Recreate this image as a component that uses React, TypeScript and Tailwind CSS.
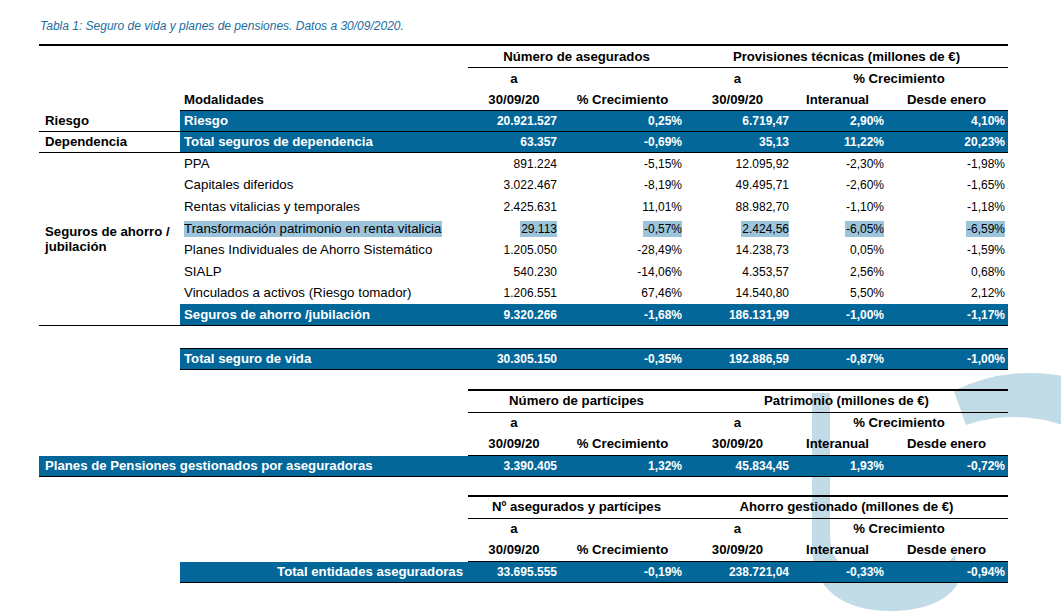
import React from "react";

const FONT = { fontFamily: '"Liberation Sans", Arial, sans-serif' };
const G7 = "grid grid-cols-[141px_288px_92px_125px_105px_95px_123px]";
const G6 = "grid grid-cols-[288px_92px_125px_105px_95px_123px]";
const G5 = "grid grid-cols-[92px_125px_105px_95px_123px]";
const PR = ["pr-[3px]", "pr-[3px]", "pr-[1px]", "pr-[1px]", "pr-[3px]"];
const BLUE = "bg-[#03679a]";

type Vals = [string, string, string, string, string];

function NumCells({ vals, bold, white, border, hl, h }: { vals: Vals; bold?: boolean; white?: boolean; border?: string; hl?: boolean; h: string }) {
  return (
    <>
      {vals.map((v, i) => (
        <div
          key={i}
          className={`${h} ${border ?? ""} ${PR[i]} flex items-center justify-end text-[12px] ${bold ? "font-bold" : ""} ${white ? "text-white" : "text-black"}`}
        >
          {hl ? <span className="bg-[#9cc5dc] leading-[16px] inline-block pl-[1px]">{v}</span> : v}
        </div>
      ))}
    </>
  );
}

function SectionHeader({ first, left, right, modal }: { first?: boolean; left: string; right: string; modal?: boolean }) {
  const top = "border-t-2 border-black";
  const hdr = "font-bold text-[13.2px] text-black flex items-center justify-center";
  return (
    <div className={G7}>
      <div className={`h-[24px] ${first ? top : ""}`} />
      <div className={`h-[24px] ${first ? top : ""}`} />
      <div className={`col-span-2 h-[24px] ${top} border-b ${hdr}`}>{left}</div>
      <div className={`col-span-3 h-[24px] ${top} border-b ${hdr}`}>{right}</div>

      <div className="h-[21px]" />
      <div className="h-[21px]" />
      <div className={`h-[21px] ${hdr}`}>a</div>
      <div className="h-[21px]" />
      <div className={`h-[21px] ${hdr}`}>a</div>
      <div className={`col-span-2 h-[21px] ${hdr}`}>% Crecimiento</div>

      <div className="h-[22px]" />
      <div className={`h-[22px] ${modal ? "border-b border-black" : ""} font-bold text-[13.2px] flex items-center pl-[4px]`}>
        {modal ? "Modalidades" : ""}
      </div>
      <div className={`h-[22px] border-b border-black ${hdr}`}>30/09/20</div>
      <div className={`h-[22px] border-b border-black ${hdr}`}>% Crecimiento</div>
      <div className={`h-[22px] border-b border-black ${hdr}`}>30/09/20</div>
      <div className={`h-[22px] border-b border-black ${hdr}`}>Interanual</div>
      <div className={`h-[22px] border-b border-black ${hdr}`}>Desde enero</div>
    </div>
  );
}

const detail: { label: string; vals: Vals; hl?: boolean }[] = [
  { label: "PPA", vals: ["891.224", "-5,15%", "12.095,92", "-2,30%", "-1,98%"] },
  { label: "Capitales diferidos", vals: ["3.022.467", "-8,19%", "49.495,71", "-2,60%", "-1,65%"] },
  { label: "Rentas vitalicias y temporales", vals: ["2.425.631", "11,01%", "88.982,70", "-1,10%", "-1,18%"] },
  { label: "Transformación patrimonio en renta vitalicia", vals: ["29.113", "-0,57%", "2.424,56", "-6,05%", "-6,59%"], hl: true },
  { label: "Planes Individuales de Ahorro Sistemático", vals: ["1.205.050", "-28,49%", "14.238,73", "0,05%", "-1,59%"] },
  { label: "SIALP", vals: ["540.230", "-14,06%", "4.353,57", "2,56%", "0,68%"] },
  { label: "Vinculados a activos (Riesgo tomador)", vals: ["1.206.551", "67,46%", "14.540,80", "5,50%", "2,12%"] },
];

function Watermark() {
  return (
    <svg className="absolute left-0 top-0 pointer-events-none" width={1061} height={611} viewBox="0 0 1061 611">
      <path
        d="M 953.8 390.8 A 172 172 0 0 1 1179 459 L 1158 530 A 148 148 0 0 0 966 425 Z"
        fill="#c1dbe7"
      />
      <path
        d="M 812 393 L 830 393 L 830 535 C 830 565 850 578 890 578 C 925 578 945 568 955 555 L 957 585 C 945 603 920 611 890 611 C 845 611 812 590 812 545 Z"
        fill="#c1dbe7"
      />
    </svg>
  );
}

export default function App() {
  const blueLabel = "font-bold text-[13.2px] text-white flex items-center";
  const colA = "font-bold text-[13.2px] text-black flex items-center pl-[6px]";
  return (
    <div className="relative w-[1061px] h-[611px] bg-white overflow-hidden" style={FONT}>
      <Watermark />
      <div className="relative z-10">
        <div className="pt-[19px] pl-[40px] h-[44px] text-[12px] leading-[14px] italic text-[#1b6e9f]">
          Tabla 1: Seguro de vida y planes de pensiones. Datos a 30/09/2020.
        </div>

        <div className="ml-[39px] w-[969px]">
          {/* Section 1 */}
          <SectionHeader first modal left="Número de asegurados" right="Provisiones técnicas (millones de €)" />

          <div className={G7}>
            <div className={`h-[21px] border-b border-black ${colA}`}>Riesgo</div>
            <div className={`h-[21px] border-b border-black ${BLUE} ${blueLabel} pl-[4px]`}>Riesgo</div>
            <div className={`col-span-5 ${BLUE} ${G5}`}>
              <NumCells h="h-[21px]" border="border-b border-black" bold white vals={["20.921.527", "0,25%", "6.719,47", "2,90%", "4,10%"]} />
            </div>

            <div className={`h-[21px] border-b border-black ${colA}`}>Dependencia</div>
            <div className={`h-[21px] border-b border-black ${BLUE} ${blueLabel} pl-[4px]`}>Total seguros de dependencia</div>
            <div className={`col-span-5 ${BLUE} ${G5}`}>
              <NumCells h="h-[21px]" border="border-b border-black" bold white vals={["63.357", "-0,69%", "35,13", "11,22%", "20,23%"]} />
            </div>
          </div>

          <div className="flex">
            <div className={`w-[141px] h-[173px] border-b border-black ${colA} leading-[15px]`}>
              Seguros de ahorro /<br />jubilación
            </div>
            <div className={G6}>
              {detail.map((r) => (
                <React.Fragment key={r.label}>
                  <div className="h-[21.6px] text-[13.3px] text-black flex items-center pl-[4px]">
                    {r.hl ? <span className="bg-[#9cc5dc] leading-[16px] inline-block pr-[1px]">{r.label}</span> : r.label}
                  </div>
                  <NumCells h="h-[21.6px]" vals={r.vals} hl={r.hl} />
                </React.Fragment>
              ))}
              <div className={`h-[21.8px] border-b border-black ${BLUE} ${blueLabel} pl-[4px]`}>Seguros de ahorro /jubilación</div>
              <div className={`col-span-5 ${BLUE} ${G5}`}>
                <NumCells h="h-[21.8px]" border="border-b border-black" bold white vals={["9.320.266", "-1,68%", "186.131,99", "-1,00%", "-1,17%"]} />
              </div>
            </div>
          </div>

          <div className={`${G7} mt-[21.5px]`}>
            <div className="h-[22.5px]" />
            <div className={`h-[22.5px] border-y border-black ${BLUE} ${blueLabel} pl-[4px]`}>Total seguro de vida</div>
            <div className={`col-span-5 ${BLUE} ${G5}`}>
              <NumCells h="h-[22.5px]" border="border-y border-black" bold white vals={["30.305.150", "-0,35%", "192.886,59", "-0,87%", "-1,00%"]} />
            </div>
          </div>

          {/* Section 2 */}
          <div className="mt-[18.5px]">
            <SectionHeader left="Número de partícipes" right="Patrimonio (millones de €)" />
            <div className={G7}>
              <div className={`col-span-2 h-[21.5px] border-b border-black ${BLUE} ${blueLabel} pl-[6px]`}>
                Planes de Pensiones gestionados por aseguradoras
              </div>
              <div className={`col-span-5 ${BLUE} ${G5}`}>
                <NumCells h="h-[21.5px]" border="border-b border-black" bold white vals={["3.390.405", "1,32%", "45.834,45", "1,93%", "-0,72%"]} />
              </div>
            </div>
          </div>

          {/* Section 3 */}
          <div className="mt-[17.5px]">
            <SectionHeader left="Nº asegurados y partícipes" right="Ahorro gestionado (millones de €)" />
            <div className={G7}>
              <div className="h-[21.5px]" />
              <div className={`h-[21.5px] border-b border-black ${BLUE} ${blueLabel} justify-end pr-[5px]`}>
                Total entidades aseguradoras
              </div>
              <div className={`col-span-5 ${BLUE} ${G5}`}>
                <NumCells h="h-[21.5px]" border="border-b border-black" bold white vals={["33.695.555", "-0,19%", "238.721,04", "-0,33%", "-0,94%"]} />
              </div>
            </div>
          </div>
        </div>

        <div className="mt-[27.5px] ml-[26px] w-[994px] h-[2px] bg-[#86b8c8]" />
      </div>
    </div>
  );
}
